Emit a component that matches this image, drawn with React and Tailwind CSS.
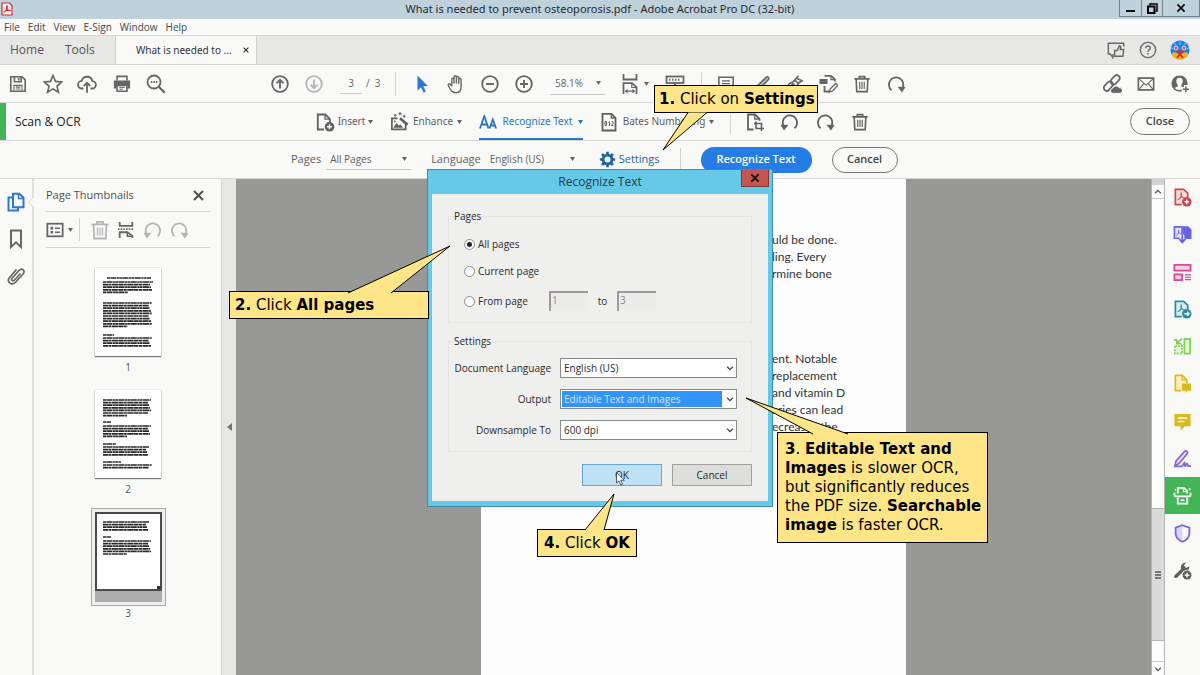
import React, { useState } from 'react';

const Svg = ({ size = 20, className = '', children }) => (
  <svg
    width={size}
    height={size}
    viewBox="0 0 20 20"
    fill="none"
    stroke="currentColor"
    strokeWidth="1.8"
    className={`shrink-0 ${className}`}
    aria-hidden="true"
  >
    {children}
  </svg>
);

const ICONS = {
  save: (
    <>
      <path d="M2 2h12.500L18 5.500V18H2z" />
      <path d="M6 2v5.500h7.500V2M10.800 3v3" />
      <path d="M5.500 17.500v-6h9v6M7.500 13.500h5M7.500 15.500h5" strokeWidth="1.2" />
    </>
  ),
  star: <path d="M10 1.5l2.5 5.9 6.300.5-4.800 4.200 1.500 6.200-5.500-3.400-5.500 3.400 1.500-6.200L1.200 7.900l6.300-.5z" strokeWidth="1.6" />,
  cloudUp: (
    <>
      <path d="M6.500 14.500H5a3.800 3.800 0 0 1-.3-7.600 5.500 5.500 0 0 1 10.700.2 3.700 3.700 0 0 1-.4 7.400h-1.500" />
      <path d="M10 18.800V9M6.800 12l3.200-3.300 3.200 3.300" />
    </>
  ),
  printer: (
    <>
      <path d="M4.500 6V1.500h11V6" />
      <path d="M1 6h18v9h-3v-4H4v4H1z" fill="currentColor" stroke="none" />
      <path d="M4.500 11.500h11v6.500h-11z" />
      <path d="M7 13.800h6M7 15.800h4" strokeWidth="1.1" />
    </>
  ),
  search: (
    <>
      <circle cx="8" cy="8" r="6.500" />
      <path d="M12.800 12.800l6 6" strokeWidth="2.200" />
      <path d="M4.800 8h1.500M7.300 8h1.500M9.800 8h1.500" />
    </>
  ),
  up: (
    <>
      <circle cx="10" cy="10" r="7.800" />
      <path d="M10 14.500V6M6.500 9.300L10 5.800l3.500 3.500" strokeWidth="1.900" />
    </>
  ),
  down: (
    <>
      <circle cx="10" cy="10" r="7.800" />
      <path d="M10 5.500V14M6.500 10.700l3.500 3.500 3.500-3.500" strokeWidth="1.900" />
    </>
  ),
  arrow: <path d="M5.500 1.500v15l3.500-3.300 2.600 5.500 2.300-1.100-2.600-5.300 4.500-.3z" fill="currentColor" stroke="none" />,
  hand: (
    <path
      d="M5.800 12.200V5.300c0-1.600 2.200-1.600 2.200 0V9.500M8 9.500V3c0-1.600 2.400-1.600 2.400 0v6.500M10.400 9.500V3.600c0-1.600 2.400-1.600 2.400 0v6M12.800 9.700V5.600c0-1.500 2.300-1.500 2.300 0v6.800c0 4-1.700 6.300-5.100 6.300-4.500 0-5.500-3-7.600-7.100-.8-1.600 1.100-2.500 2-1.200l1.400 1.800"
      strokeWidth="1.400"
    />
  ),
  minus: (
    <>
      <circle cx="10" cy="10" r="7.800" />
      <path d="M6 10h8" strokeWidth="1.900" />
    </>
  ),
  plus: (
    <>
      <circle cx="10" cy="10" r="7.800" />
      <path d="M6 10h8M10 6v8" strokeWidth="1.900" />
    </>
  ),
  fitWidth: (
    <>
      <path d="M3.500 0v5.500h13V0" />
      <path d="M3.500 20V9.200h8.500l4.500 4v6.800" />
      <path d="M11.800 9.500v4h4.500" strokeWidth="1.200" />
      <path d="M6 17.200h8M7.500 15.500L5.700 17.200l1.800 1.700M12.500 15.500l1.800 1.700-1.800 1.700" strokeWidth="1.200" />
    </>
  ),
  keyboard: (
    <>
      <rect x="1.500" y="2.500" width="17" height="6.500" />
      <path d="M4 5.800h12" strokeDasharray="1.500 1.500" strokeWidth="2" />
      <path d="M10 9v3.500M7 12.500h6" />
    </>
  ),
  note: (
    <>
      <path d="M2 2.500h16v12h-6.500l-3.500 3.500v-3.500H2z" />
      <path d="M5.500 6.500h9M5.500 9.500h9" strokeWidth="1.300" />
    </>
  ),
  pen: <path d="M3 17.500l1.500-5L14.800 2.300c1.600-1 3.400.8 2.600 2.400L7.300 15.500z" fill="#b9b9b9" />,
  sign: (
    <>
      <path d="M2.500 17.500l1.800-7.500 7-4 3.500 3.500-3.500 6.500z" />
      <path d="M9.500 7L15 .8M12.500 3.500l6.500 3-5 3" />
      <circle cx="8.800" cy="11.200" r="1.400" fill="currentColor" />
    </>
  ),
  editDoc: (
    <>
      <path d="M6.500 1.800h6.700l3.800 3.700v2M6.500 12v5.500h5" />
      <path d="M13 2v3.700h4" strokeWidth="1.200" />
      <rect x="1.500" y="5" width="8" height="5" fill="currentColor" stroke="none" />
      <path d="M11.500 18l.8-3.200 5.500-5.300 2 2-5.300 5.500z" strokeWidth="1.300" />
    </>
  ),
  trash: (
    <>
      <path d="M1.500 4.300h17M7 4V1.800h6V4" />
      <path d="M3.500 4.500l.7 14h11.600l.7-14" />
      <path d="M7.500 7.500v8M10 7.500v8M12.500 7.500v8" strokeWidth="1.300" />
    </>
  ),
  redo: (
    <>
      <path d="M5.500 16.200a7.200 7.200 0 1 1 11-2.200" />
      <path d="M11.500 12.800l8 .2-3.500 5.500z" fill="currentColor" stroke="none" />
    </>
  ),
  undo: (
    <>
      <path d="M14.500 16.200A7.200 7.200 0 1 0 3.500 14" />
      <path d="M8.500 12.800l-8 .2L4 18.500z" fill="currentColor" stroke="none" />
    </>
  ),
  insert: (
    <>
      <path d="M9 17.500H2.800v-15h7.500l4.500 4.300v4" />
      <path d="M10 2.800v4.400h4.500" strokeWidth="1.300" />
      <circle cx="14.500" cy="14.800" r="4.800" fill="currentColor" stroke="none" />
      <path d="M14.500 12.300v5M12 14.800h5" stroke="#f9f9f8" strokeWidth="1.400" />
    </>
  ),
  enhance: (
    <>
      <path d="M8 6.800H2v11.500h14.500v-6" />
      <path d="M3.500 16.500l3.300-5 2.500 3 1.500-1.500 3 3.500z" fill="currentColor" stroke="none" />
      <path d="M10.500 6.500l8 7" strokeWidth="2.800" />
      <path d="M5.500 2v3M4 3.500h3M10.500 0v3.500M8.800 1.800h3.500M15 3v3M13.500 4.500h3" strokeWidth="1.100" />
      <circle cx="5" cy="10" r="1" fill="currentColor" stroke="none" />
    </>
  ),
  page: (
    <>
      <path d="M3.500 1.800h9l4 4v12.700h-13z" />
      <path d="M12.300 2v4h4" strokeWidth="1.300" />
    </>
  ),
  cropPage: (
    <>
      <path d="M8.500 17.500H3v-15h7l4.500 4.300v2" />
      <path d="M9.800 2.800v4.200h4.500" strokeWidth="1.300" />
      <path d="M11 9.500v7h8M9 11.500h7.500v7.500" strokeWidth="1.600" />
    </>
  ),
  gear: (
    <>
      <circle cx="10" cy="10" r="5.200" strokeWidth="3.400" />
      <path d="M10 1v3M10 16v3M1 10h3M16 10h3M3.600 3.600l2.200 2.200M14.200 14.200l2.200 2.200M3.600 16.400l2.200-2.200M14.200 5.800l2.200-2.200" strokeWidth="3.200" />
    </>
  ),
  share: (
    <>
      <path d="M6.500 14.500v4l-2.800-4H1.500v-12h17v3.500" strokeWidth="1.600" />
      <path d="M8.500 10.500h2.800l2.500-5.200c1.800 0 1.700 1.800 1 4.200h3.700l-.8 7.500H8.500z" fill="#e7e7e6" strokeWidth="1.600" />
    </>
  ),
  help: (
    <>
      <circle cx="10" cy="10" r="8.500" strokeWidth="1.500" />
      <path d="M7.500 8c0-3.300 5-3.300 5 0 0 1.700-2.500 1.700-2.500 4M10 13.300v1.700" strokeWidth="1.700" />
    </>
  ),
  link: (
    <>
      <rect x="10" y="0.500" width="6" height="10.500" rx="3" transform="rotate(42 13 6)" />
      <rect x="3.500" y="7" width="6" height="10.500" rx="3" transform="rotate(42 6.500 12)" />
      <path d="M10 19.300a2.900 2.900 0 0 1 .8-5.300 3.600 3.600 0 0 1 6.400-.3 2.800 2.800 0 0 1 1 5.600z" fill="currentColor" stroke="#f9f9f8" strokeWidth="1" />
    </>
  ),
  mail: (
    <>
      <path d="M1.500 3.500h17v13h-17z" />
      <path d="M1.800 4l8.200 7.200L18.200 4M2 16.200l5.500-6.500M18 16.200l-5.500-6.500" strokeWidth="1.300" />
    </>
  ),
  user: (
    <>
      <circle cx="9.500" cy="9.500" r="9" fill="currentColor" stroke="none" />
      <path d="M9.500 3c4.600 0 4.200 5.800 2 8v1.800l3.200 1.400c-.8 3.300-9.600 3.300-10.400 0l3.200-1.400V11c-2.200-2.200-2.600-8 2-8z" fill="#f9f9f8" stroke="none" />
      <path d="M16.500 11v9M12 15.700h8" stroke="#f9f9f8" strokeWidth="4.400" />
      <path d="M16.500 12.500v6.800M13 15.900h7" strokeWidth="1.700" />
    </>
  ),
  pages: (
    <>
      <path d="M6 5.500H2.500v13h9.500V15.500" strokeWidth="2" />
      <path d="M7 1.800h6.300l4.200 4v9.500H7z" strokeWidth="2" />
      <path d="M12.500 2v4.500h5" strokeWidth="1.400" />
    </>
  ),
  bookmark: <path d="M5 1.500h10v16.500l-5-4.700-5 4.700z" strokeWidth="2" />,
  clip: (
    <path
      d="M14.500 7.500l-6 6.500c-1.800 1.900-4-.2-2.400-2L13 4.500c3-3 6.700.4 4 3.500l-7.500 8.200c-4 4.200-9.500-.7-5.800-5l6.800-7.700"
      strokeWidth="1.700"
    />
  ),
  close: <path d="M4 4l12 12M16 4L4 16" strokeWidth="2.800" />,
  list: (
    <>
      <rect x="1.500" y="3" width="17" height="14" strokeWidth="2" />
      <path d="M5 8h3M5 12.500h3" strokeWidth="3" />
      <path d="M10 8h5.500M10 12.500h5.500" strokeWidth="1.600" />
    </>
  ),
  split: (
    <>
      <path d="M3 1v4.500h14V1" strokeWidth="2" />
      <path d="M1 9h18" strokeDasharray="1.800 1.200" />
      <path d="M3 19v-6.500h8.500l5.500 4V19" strokeWidth="2" />
      <path d="M11.500 13v4h5" strokeWidth="1.600" />
    </>
  ),
  createPdf: (
    <>
      <path d="M9 17.500H2.500v-16h8.700l4.300 4v4" fill="#f9dcde" />
      <path d="M4.800 12.500c3.500-1.800 4.500-5 3.800-7.200-1.300 3 1.500 5 4.200 5.400" strokeWidth="1.100" />
      <circle cx="14.500" cy="14.500" r="5" fill="currentColor" stroke="none" />
      <path d="M14.500 12v5M12 14.500h5" stroke="#fff" strokeWidth="1.400" />
    </>
  ),
  combine: (
    <>
      <path d="M10.500 1.200h5.500l3.500 3.500v10h-9z" fill="currentColor" stroke="none" />
      <path d="M7 14H1.500V2h8v9" fill="#e4e2fb" strokeWidth="1.700" />
      <path d="M3.300 11c2.500-1.500 3.200-4 2.600-5.500-1 2 .8 3.500 2.600 4" strokeWidth="1" />
      <path d="M9.800 10v6M6.500 14.500l3.300 4 3.300-4" stroke="#f9f9f8" strokeWidth="4" />
      <path d="M9.800 10v7M6.500 14.500l3.300 3.700 3.300-3.700" strokeWidth="2" />
    </>
  ),
  organize: (
    <>
      <rect x="1.500" y="2" width="17" height="6" fill="#f6cfe2" />
      <rect x="1.500" y="12" width="8" height="6" fill="#f6cfe2" />
      <path d="M12.500 12.500h6.500M12.500 15h6.500M12.500 17.500h6.500" strokeWidth="1.200" />
    </>
  ),
  exportPdf: (
    <>
      <path d="M9 17.500H2.500v-16h8.700l4.300 4v4" fill="#d3ebee" />
      <path d="M4.800 12.500c3.500-1.800 4.500-5 3.800-7.200-1.300 3 1.500 5 4.200 5.400" strokeWidth="1.100" />
      <circle cx="14.500" cy="14.500" r="5" fill="currentColor" stroke="none" />
      <path d="M11.800 14.500h5M14.800 12.300l2.200 2.200-2.200 2.200" stroke="#fff" strokeWidth="1.400" />
    </>
  ),
  compress: (
    <>
      <rect x="12" y="2" width="6" height="15.500" fill="#e0f5d0" />
      <rect x="2" y="9.500" width="7.500" height="8" fill="#e0f5d0" strokeDasharray="2 1.200" />
      <path d="M1 3h3" />
      <path d="M9.500 1.800L4.500 6.500M4 2.500v4.500h5" strokeWidth="1.900" />
    </>
  ),
  comment: (
    <>
      <path d="M8.500 17.500H2.500v-16h7.200l4.800 4.500v4" fill="#fbf0c0" />
      <path d="M9.500 1.800v4.500h4.500" strokeWidth="1.300" />
      <path d="M9.500 10h9.500v7.500h-3.500L13.500 20v-2.500h-4z" fill="currentColor" stroke="none" />
    </>
  ),
  bubble: (
    <>
      <path d="M1.500 2h17v13h-6l-4.500 4.500V15H1.500z" fill="currentColor" stroke="none" />
      <path d="M5 6.500h10M5 10h7" stroke="#fdf6d5" />
    </>
  ),
  fillSign: (
    <>
      <path d="M2 17.800l1.200-5L12 2.700c1.800-1.700 4.300.4 2.900 2.400l-8.400 10z" fill="#ece6fb" />
      <path d="M2 18.300h7c1.500 0 2.500-4.500 3.200-4.300.8.300-.8 4 .6 4 1 0 1-2.500 2-2.500s.2 2.500 1.300 2.500h2.900" />
    </>
  ),
  scan: (
    <>
      <path d="M5 8V2h6.500l3.500 3.300V8M5 12v6.500h10V12" strokeWidth="1.900" />
      <path d="M1.500 7v2.500c0 1 .5 1.500 1.500 1.500h14c1 0 1.500-.5 1.500-1.500V7" strokeWidth="1.900" />
      <path d="M11 2v3.800h4" strokeWidth="1.300" />
      <path d="M8 15h4" />
      <path d="M2.500 3v2M17.500 2v2.500M16.300 3.200h2.500" strokeWidth="1" />
    </>
  ),
  shield: (
    <>
      <path d="M10 3v14.500c-4-2-6.500-4.500-6.500-7.500V4.500z" fill="#d9d4f8" stroke="none" />
      <path d="M10 1.300l7.200 2.500v6.500c0 4-3.200 6.700-7.200 8.400-4-1.700-7.200-4.400-7.200-8.400V3.800z" strokeWidth="1.900" />
    </>
  ),
  wrench: (
    <>
      <path d="M1.500 15.200l7-6.700C7.300 5 10 1.300 13.800 1.800l-2.300 2.700 2.300 2.800 3.200-1.800c.4 2-.4 3.700-1.800 4.800-1.500 1-3 1-4 .5l-7 6.800c-1.800 1.300-4-.8-2.700-2.400z" fill="currentColor" stroke="none" />
      <circle cx="14.800" cy="14.800" r="5.500" fill="#f9f9f8" stroke="none" />
      <circle cx="14.800" cy="14.800" r="4.700" fill="currentColor" stroke="none" />
      <path d="M14.800 12.300v5M12.300 14.800h5" stroke="#fff" strokeWidth="1.400" />
    </>
  ),
  chevron: <path d="M3 7l7 7 7-7" strokeWidth="3.200" />,
};

const Icon = ({ name, size, className }) => (
  <Svg size={size} className={className}>{ICONS[name]}</Svg>
);

const Caret = () => (
  <svg width="5" height="4" viewBox="0 0 5 4" className="shrink-0 fill-current" aria-hidden="true">
    <path d="M0 0h5L2.500 4z" />
  </svg>
);

const IconButton = ({ name, label, size = 18, className = '' }) => (
  <button type="button" aria-label={label} className={`flex w-5 shrink-0 items-center justify-center ${className}`}>
    <Icon name={name} size={size} />
  </button>
);

const Divider = ({ className = '' }) => <span className={`w-px shrink-0 bg-[#d2d2d1] ${className}`} />;

const TitleBar = () => (
  <header className="relative flex h-[19px] shrink-0 items-center justify-center bg-[#bfd2dc] text-black">
    <svg width="12" height="14" viewBox="0 0 12 14" className="absolute left-px top-[2px]" aria-hidden="true">
      <path d="M1 1h7.500L11 3.500V13H1z" fill="#fdecec" stroke="#c9303a" strokeWidth="1.200" />
      <path d="M3 10c2.500-1 3.800-4 3-6.500C4.500 6.500 7 8.500 9.500 8.500 7 8 4.500 8.500 3 10z" fill="#d0202c" stroke="#d0202c" />
    </svg>
    <h1 className="font-['Noto_Sans',sans-serif] text-[11px] text-[#1f2b33]">
      What is needed to prevent osteoporosis.pdf - Adobe Acrobat Pro DC (32-bit)
    </h1>
    <div className="absolute right-0 top-0 flex h-[17px] border-b border-l border-[#6e8490]">
      <button type="button" aria-label="Minimize" className="flex w-[22px] items-end justify-center border-r border-[#6e8490] pb-1">
        <span className="h-[2px] w-[9px] bg-black" />
      </button>
      <button type="button" aria-label="Restore" className="flex w-[21px] items-center justify-center border-r border-[#6e8490]">
        <svg width="11" height="11" viewBox="0 0 11 11" fill="none" stroke="#000" aria-hidden="true">
          <path d="M3 2.500V1h7v7H8.500" strokeWidth="1.500" />
          <rect x="1" y="3.500" width="6.500" height="6.500" strokeWidth="2" />
        </svg>
      </button>
      <button type="button" aria-label="Close window" className="flex w-[37px] items-center justify-center border-r border-[#6e8490]">
        <Icon name="close" size={12} />
      </button>
    </div>
  </header>
);

const MenuBar = () => (
  <nav className="flex h-4 shrink-0 items-center gap-2 bg-[#fbfbfb] pl-1 text-[10px] text-[#444]">
    {['File', 'Edit', 'View', 'E-Sign', 'Window', 'Help'].map((item) => (
      <button key={item} type="button">{item}</button>
    ))}
  </nav>
);

const Avatar = () => (
  <svg width="20" height="20" viewBox="0 0 20 20" aria-hidden="true">
    <clipPath id="avatar">
      <circle cx="10" cy="10" r="9.500" />
    </clipPath>
    <g clipPath="url(#avatar)">
      <path d="M0 0h20v20H0z" fill="#1583e0" />
      <path d="M0 14l5-2 5 3 5-3 5 2v6H0z" fill="#f8b418" />
      <path d="M4 2l2 3M16 2l-2 3M10 0v5M1 8l2 1M19 8l-2 1" stroke="#38c0f0" strokeWidth="1.500" />
      <path d="M7 10l6 8M13 10l-6 8" stroke="#e02a28" strokeWidth="2" />
      <circle cx="6" cy="8" r="2.500" fill="#f3a5c8" />
      <circle cx="14" cy="8" r="2.500" fill="#f3a5c8" />
      <circle cx="6" cy="8" r="1" fill="#8b3a90" />
      <circle cx="14" cy="8" r="1" fill="#8b3a90" />
    </g>
  </svg>
);

const TabBar = () => (
  <div className="flex h-[30px] shrink-0 items-stretch border-y border-[#d6d6d5] bg-[#e7e7e6]">
    <div className="flex w-[116px] shrink-0 items-center gap-[21px] border-r border-[#d0d0cf] pl-[10px] text-xs text-[#555]">
      <button type="button">Home</button>
      <button type="button">Tools</button>
    </div>
    <div className="flex w-[141px] shrink-0 items-center justify-between border-r border-[#d0d0cf] bg-[#f9f9f8] pl-5 pr-[6px] font-['Noto_Sans',sans-serif] text-[10px] text-[#333]">
      <span>What is needed to ...</span>
      <button type="button" aria-label="Close tab"><Icon name="close" size={8} /></button>
    </div>
    <div className="ml-auto flex items-center gap-3 pr-[10px] text-[#6a6a6a]">
      <IconButton name="share" label="Share feedback" />
      <IconButton name="help" label="Help" />
      <button type="button" aria-label="Account"><Avatar /></button>
    </div>
  </div>
);

const Toolbar = () => (
  <div className="flex h-[38px] shrink-0 items-center border-b border-[#d6d6d5] text-[10px] text-[#666]">
    <div className="ml-2 flex w-[158px] shrink-0 justify-between">
      <IconButton name="save" label="Save" />
      <IconButton name="star" label="Star" size={20} />
      <IconButton name="cloudUp" label="Upload" size={20} />
      <IconButton name="printer" label="Print" />
      <IconButton name="search" label="Search" size={20} />
    </div>
    <div className="ml-[104px] flex shrink-0 items-center">
      <IconButton name="up" label="Previous page" size={20} />
      <IconButton name="down" label="Next page" size={20} className="ml-[14px] text-[#b5b5b5]" />
      <input aria-label="Page number" defaultValue="3" className="ml-4 h-5 w-[22px] border-b border-[#c8c8c8] text-center" />
      <span className="ml-1 w-5">/ &nbsp;3</span>
      <Divider className="ml-[9px] h-6" />
      <IconButton name="arrow" label="Select" size={20} className="ml-4 text-[#2a78d0]" />
      <IconButton name="hand" label="Pan" size={20} className="ml-[14px]" />
      <IconButton name="minus" label="Zoom out" size={20} className="ml-[14px]" />
      <IconButton name="plus" label="Zoom in" size={20} className="ml-[14px]" />
      <button type="button" className="ml-4 flex h-[22px] w-[55px] items-center justify-between border-b border-[#c8c8c8] pl-[5px] pr-1">
        58.1% <Caret />
      </button>
      <button type="button" aria-label="Fit width" className="ml-[15px] flex items-center gap-1">
        <Icon name="fitWidth" size={20} />
        <Caret />
      </button>
      <IconButton name="keyboard" label="Page display" size={20} className="ml-4" />
      <Divider className="ml-4 h-6" />
      <IconButton name="note" label="Comment" className="ml-[14px]" />
      <IconButton name="pen" label="Highlight" className="ml-4" />
      <IconButton name="sign" label="Sign" className="ml-3" />
      <IconButton name="editDoc" label="Edit" size={20} className="ml-[14px]" />
      <IconButton name="trash" label="Delete" className="ml-[14px]" />
      <IconButton name="redo" label="Rotate" size={20} className="ml-[14px]" />
    </div>
    <div className="ml-auto flex gap-[14px] pr-[10px]">
      <IconButton name="link" label="Copy link" size={20} />
      <IconButton name="mail" label="Email" />
      <IconButton name="user" label="Add people" />
    </div>
  </div>
);

const ScanBar = () => (
  <div className="flex h-[38px] shrink-0 items-center border-b border-[#d6d6d5] font-['Noto_Sans',sans-serif] text-[10px] text-[#606060]">
    <span className="h-full w-[6px] shrink-0 bg-[#44b556]" />
    <h2 className="ml-[9px] w-[300px] shrink-0 font-['Open_Sans',sans-serif] text-xs text-[#222]">Scan &amp; OCR</h2>
    <button type="button" className="flex w-[58px] shrink-0 items-center justify-between">
      <Icon name="insert" size={20} /> Insert <Caret />
    </button>
    <button type="button" className="ml-[17px] flex w-[72px] shrink-0 items-center justify-between">
      <Icon name="enhance" size={19} /> Enhance <Caret />
    </button>
    <button type="button" className="ml-[17px] flex h-full w-[104px] shrink-0 items-center justify-between border-y-2 border-t-transparent border-b-[#2a74c0] text-[#2a74c0]">
      <svg width="18" height="14" viewBox="0 0 18 14" fill="none" stroke="currentColor" strokeWidth="1.800" aria-hidden="true">
        <path d="M1 13.500L5.300 1l4.200 12.500M2.500 9.500h5.700M10.500 13.500l3.300-9 3.300 9M11.500 10.500h4.500" />
      </svg>
      Recognize Text <Caret />
    </button>
    <button type="button" className="ml-4 flex w-[115px] shrink-0 items-center justify-between">
      <span className="relative flex">
        <Icon name="page" size={20} />
        <svg width="10" height="6" viewBox="0 0 10 6" className="absolute left-[5px] top-[9px]" fill="none" stroke="currentColor" aria-hidden="true">
          <path d="M1 .5h1.500v4H1zM4.500 1.500l1-.8v4.300M7.500.8h1.500v1.800L7.500 4.500H9.500" />
        </svg>
      </span>
      Bates Numbering <Caret />
    </button>
    <Divider className="ml-4 h-6" />
    <div className="ml-[14px] flex shrink-0 gap-[15px]">
      <IconButton name="cropPage" label="Crop page" size={20} />
      <IconButton name="undo" label="Rotate left" size={20} />
      <IconButton name="redo" label="Rotate right" size={20} />
      <IconButton name="trash" label="Delete pages" />
    </div>
    <button type="button" className="ml-auto mr-[10px] h-[27px] w-[60px] rounded-full border border-[#777] font-['Open_Sans',sans-serif] text-[11px] font-semibold text-[#444]">
      Close
    </button>
  </div>
);

const UnderlineSelect = ({ id, label, value, className }) => (
  <div className="flex shrink-0 items-center gap-[5px]">
    <label htmlFor={id}>{label}</label>
    <div className={`relative flex h-5 items-center border-b border-[#c8c8c8] ${className}`}>
      <select id={id} defaultValue={value} className="w-full appearance-none bg-transparent pl-1 text-[10px] outline-none">
        <option>{value}</option>
      </select>
      <span className="pointer-events-none absolute right-1"><Caret /></span>
    </div>
  </div>
);

const OptionsBar = () => (
  <div className="flex h-[38px] shrink-0 items-center border-b border-[#d6d6d5] pl-[291px] text-[11px] text-[#606060]">
    <UnderlineSelect id="pages" label="Pages" value="All Pages" className="w-[85px]" />
    <div className="ml-5 flex">
      <UnderlineSelect id="language" label="Language" value="English (US)" className="w-[93px]" />
    </div>
    <button type="button" className="ml-5 flex shrink-0 items-center gap-[3px] text-[#1d63a8]">
      <Icon name="gear" size={17} /> Settings
    </button>
    <Divider className="ml-5 h-6" />
    <button type="button" className="ml-5 h-[26px] w-[111px] shrink-0 rounded-full bg-[#257ce5] font-semibold text-white">
      Recognize Text
    </button>
    <button type="button" className="ml-5 h-[26px] w-[66px] shrink-0 rounded-full border border-[#777] font-semibold text-[#444]">
      Cancel
    </button>
  </div>
);

// each row: y, line count, x, width
const THUMBS = [
  { page: 1, rows: [[10, 1, 12, 44], [14, 5, 8, 50], [35, 10, 8, 49], [67, 1, 8, 11], [70, 4, 8, 49]] },
  { page: 2, rows: [[10, 7, 8, 48], [32, 1, 8, 8], [36, 5, 8, 48], [54, 1, 8, 13], [57, 4, 8, 46], [72, 1, 8, 18], [75, 2, 8, 49]] },
  { page: 3, rows: [[8, 4, 6, 46], [23, 1, 6, 8], [27, 6, 6, 48]] },
];

const ThumbText = ({ rows }) => (
  <svg width="66" height="88" viewBox="0 0 66 88" aria-hidden="true">
    {rows.map(([y, count, x, w]) =>
      Array.from({ length: count }, (_, i) => (
        <path
          key={`${y}-${i}`}
          d={`M${x} ${y + i * 2.6}h${i === count - 1 && count > 4 ? w * 0.5 : w - ((i * 3) % 4)}`}
          stroke="#2a2a2a"
          strokeWidth="1.700"
          strokeDasharray={i % 2 ? '5 .4 3 .5 6 .4' : '3 .4 6 .5 2 .3'}
        />
      ))
    )}
  </svg>
);

const Thumbnail = ({ page, rows, active }) => (
  <figure className="flex flex-col items-center">
    {active ? (
      <div className="-mt-1 border border-[#a8a8a8] bg-[#eee] p-[3px]">
        <div className="h-[90px] w-[67px] bg-[#adadad]">
          <div className="relative h-[79px] overflow-hidden border-2 border-[#4a4a4a] bg-white">
            <ThumbText rows={rows} />
            <span className="absolute bottom-0 right-0 size-[3px] bg-[#333]" />
          </div>
        </div>
      </div>
    ) : (
      <div className="mb-1 bg-white shadow-[0_1px_1px_#777,0_0_1px_#999]">
        <ThumbText rows={rows} />
      </div>
    )}
    <figcaption className="text-[10px] leading-[15px] text-[#555]">{page}</figcaption>
  </figure>
);

const SidePanel = () => (
  <aside className="flex shrink-0">
    <div className="relative flex w-[34px] flex-col items-center gap-[17px] border-r-2 border-[#e0e0df] pt-[13px] text-[#666]">
      <IconButton name="pages" label="Page thumbnails" size={20} className="text-[#2a78d0]" />
      <IconButton name="bookmark" label="Bookmarks" size={20} />
      <IconButton name="clip" label="Attachments" size={20} />
      <svg width="6" height="12" viewBox="0 0 6 12" className="absolute -right-[2px] top-[17px]" aria-hidden="true">
        <path d="M6 0L1 6l5 6" fill="#f9f9f8" stroke="#d6d6d5" />
      </svg>
    </div>
    <div className="w-[188px] border-r border-[#d6d6d5] pl-3 pr-[11px]">
      <div className="flex h-[33px] items-center justify-between border-b border-[#d6d6d5] pr-[2px] text-[11px] text-[#505050]">
        <h2>Page Thumbnails</h2>
        <IconButton name="close" label="Close panel" size={15} />
      </div>
      <div className="flex h-9 items-center border-b border-[#d6d6d5] text-[#666]">
        <button type="button" aria-label="Options" className="flex items-center gap-1">
          <Icon name="list" size={18} /> <Caret />
        </button>
        <Divider className="ml-[6px] h-[23px]" />
        <IconButton name="trash" label="Delete" size={20} className="ml-[10px] text-[#b5b5b5]" />
        <IconButton name="split" label="Split" className="ml-[6px]" />
        <IconButton name="undo" label="Rotate left" size={20} className="ml-[7px] text-[#b5b5b5]" />
        <IconButton name="redo" label="Rotate right" size={20} className="ml-[6px] text-[#b5b5b5]" />
      </div>
      <div className="flex flex-col items-center gap-[15px] pt-5">
        {THUMBS.map((thumb) => (
          <Thumbnail key={thumb.page} {...thumb} active={thumb.page === 3} />
        ))}
      </div>
    </div>
    <button type="button" aria-label="Collapse panel" className="flex w-[14px] items-center justify-center bg-[#e7e7e6]">
      <svg width="5" height="8" viewBox="0 0 5 8" aria-hidden="true"><path d="M5 0v8L0 4z" fill="#777" /></svg>
    </button>
  </aside>
);

const DocumentPage = () => (
  <main className="flex flex-1 justify-center bg-[#989897]">
    <article className="w-[425px] bg-[#fdfdfd] pl-[291px] pt-[52px] font-[Lato,sans-serif] text-xs leading-[17px] text-[#333]">
      <p>
        uld be done.<br />ling. Every<br />rmine bone
      </p>
      <p className="mt-[68px]">
        ent. Notable<br />replacement<br />and vitamin D<br />aries can lead<br />ecreases the
      </p>
    </article>
  </main>
);

const ScrollBar = () => (
  <div className="flex w-[14px] shrink-0 flex-col border-x border-[#b5b5b5] bg-[#fdfdfd] text-[#555]">
    <span className="h-[6px] bg-[#d2d2d2]" />
    <button type="button" aria-label="Scroll up" className="flex h-[14px] items-center justify-center border-b border-[#c8c8c8]">
      <Icon name="chevron" size={8} className="rotate-180" />
    </button>
    <div className="flex flex-1 flex-col justify-end pb-5">
      <div className="flex h-[133px] flex-col items-center justify-center gap-px border-y border-[#b5b5b5] bg-[#dadada]">
        {[0, 1, 2].map((i) => <span key={i} className="h-[2px] w-[6px] bg-[#777]" />)}
      </div>
    </div>
    <button type="button" aria-label="Scroll down" className="flex h-[14px] items-center justify-center border-t border-[#c8c8c8]">
      <Icon name="chevron" size={8} />
    </button>
  </div>
);

const TOOLS = [
  ['createPdf', 'Create PDF', 'text-[#cf4450]'],
  ['combine', 'Combine files', 'text-[#6862e0]'],
  ['organize', 'Organize pages', 'text-[#d0478f]'],
  ['exportPdf', 'Export PDF', 'text-[#2a8d99]'],
  ['compress', 'Compress PDF', 'text-[#84cf55]'],
  ['comment', 'Send for comments', 'text-[#dbb820]'],
  ['bubble', 'Comment', 'text-[#dcb91e]'],
  ['fillSign', 'Fill & sign', 'text-[#8464d0]'],
  ['scan', 'Scan & OCR', 'bg-[#44b556] text-white'],
  ['shield', 'Protect', 'text-[#7468dc]'],
  ['wrench', 'More tools', 'text-[#5f5f5f]'],
];

const ToolRail = () => (
  <aside className="w-[35px] shrink-0">
    <div className="flex h-[410px] flex-col">
      {TOOLS.map(([name, label, color]) => (
        <button key={name} type="button" aria-label={label} className={`flex flex-1 items-center justify-center ${color}`}>
          <Icon name={name} size={19} />
        </button>
      ))}
    </div>
  </aside>
);

const DialogSelect = ({ id, label, value, highlighted }) => (
  <div className="flex items-center">
    <label htmlFor={id} className="w-[111px] pr-[9px] text-right">{label}</label>
    <div className="relative flex h-5 w-[177px] items-center border border-[#8a8a8a] bg-white">
      <select
        id={id}
        defaultValue={value}
        className={`ml-px mr-[14px] h-4 flex-1 appearance-none pl-[2px] outline-none ${highlighted ? 'bg-[#3293fb] text-[#d5e9ff]' : ''}`}
      >
        <option>{value}</option>
      </select>
      <Icon name="chevron" size={8} className="pointer-events-none absolute right-[2px] text-[#444]" />
    </div>
  </div>
);

const RecognizeDialog = () => {
  const [range, setRange] = useState('all');

  const radio = (value, label) => (
    <label className="flex items-center gap-[3px]">
      <input
        type="radio"
        name="range"
        value={value}
        checked={range === value}
        onChange={() => setRange(value)}
        className="size-[11px] appearance-none rounded-full border border-[#8a8a8a] bg-white checked:bg-[radial-gradient(circle,#222_0_2px,#fff_3px)]"
      />
      {label}
    </label>
  );

  return (
    <section
      role="dialog"
      aria-label="Recognize Text"
      className="absolute left-1/2 top-[169px] w-[346px] -translate-x-1/2 border border-[#3b8fad] bg-[#66c9e8] px-1 pb-[5px] text-[10px] leading-[14px] text-[#2a2a2a]"
    >
      <div className="relative flex h-6 items-center justify-center">
        <h2 className="text-xs text-[#1f3d48]">Recognize Text</h2>
        <button type="button" aria-label="Close dialog" className="absolute -right-px top-0 flex h-[17px] w-[28px] items-center justify-center border border-t-0 border-[#7d3a38] bg-[#c75550] text-black">
          <Icon name="close" size={12} />
        </button>
      </div>
      <form className="bg-[#efefee] px-4 pb-[15px] pt-[15px]">
        <fieldset className="h-[114px] border border-[#e3e3e2] px-[15px]">
          <legend className="-ml-[10px]">Pages</legend>
          <div className="mt-[14px] flex flex-col items-start gap-[13px]">
            {radio('all', 'All pages')}
            {radio('current', 'Current page')}
            <div className="flex items-center">
              <div className="w-[85px]">{radio('from', 'From page')}</div>
              <input aria-label="First page" disabled defaultValue="1" className="h-5 w-[39px] border-l-2 border-t-2 border-[#9a9a9a] bg-[#ececeb] pb-1 pl-px text-[#888]" />
              <span className="w-[29px] text-center">to</span>
              <input aria-label="Last page" disabled defaultValue="3" className="h-5 w-[39px] border-l-2 border-t-2 border-[#9a9a9a] bg-[#ececeb] pb-1 pl-px text-[#888]" />
            </div>
          </div>
        </fieldset>
        <fieldset className="mt-[11px] h-[118px] border border-[#e3e3e2]">
          <legend className="ml-[5px]">Settings</legend>
          <div className="mt-[10px] flex flex-col gap-[11px]">
            <DialogSelect id="doc-language" label="Document Language" value="English (US)" />
            <DialogSelect id="output" label="Output" value="Editable Text and Images" highlighted />
            <DialogSelect id="downsample" label="Downsample To" value="600 dpi" />
          </div>
        </fieldset>
        <div className="mt-3 flex justify-end gap-[10px]">
          <button type="button" className="relative h-[22px] w-20 border border-[#6aa5d0] bg-[#bfe1f6]">
            OK
            <svg width="9" height="14" viewBox="0 0 9 14" className="absolute left-[33px] top-[7px]" aria-hidden="true">
              <path d="M.5.5v10.500l2.500-2.200 1.800 4.300 1.800-.8-1.800-4h3.500z" fill="#fff" stroke="#333" strokeWidth=".8" />
            </svg>
          </button>
          <button type="button" className="h-[22px] w-20 border border-[#a0a0a0] bg-[#dddddc]">Cancel</button>
        </div>
      </form>
    </section>
  );
};

// a yellow note with a tail; the tail covers the note's border where they meet
const Callout = ({ className, tailClass, tailSize, tail, children }) => {
  const [w, h] = tailSize;
  return (
    <div className={`absolute border border-black bg-[#fee587] font-['DejaVu_Sans',sans-serif] text-black ${className}`}>
      <svg width={w} height={h} viewBox={`0 0 ${w} ${h}`} className={`absolute ${tailClass}`} aria-hidden="true">
        <polygon points={tail} fill="#fee587" />
        <polyline points={tail} fill="none" stroke="#000" strokeLinejoin="bevel" />
      </svg>
      <p className="relative">{children}</p>
    </div>
  );
};

const Callouts = () => (
  <div className="text-[15px] leading-[19px]">
    <Callout className="left-[654px] top-[85px] h-[28px] w-[164px] py-1 pl-1" tailSize={[48, 40]} tailClass="left-[6px] top-[25px]" tail="27,1.500 2,39 46,1.500">
      <b>1.</b> Click on <b>Settings</b>
    </Callout>
    <Callout className="left-[229px] top-[291px] h-[28px] w-[200px] py-1 pl-[5px]" tailSize={[104, 50]} tailClass="left-[117px] top-[-47px]" tail="1,48 103,1 44,48">
      <b>2.</b> Click <b>All pages</b>
    </Callout>
    <Callout className="left-[777px] top-[432px] w-[211px] py-[7px] pl-[7px]" tailSize={[104, 38]} tailClass="left-[-33px] top-[-36px]" tail="68,37 1,1 103,37">
      <b>3</b>. <b>Editable Text and Images</b> is slower OCR, but significantly reduces the PDF size. <b>Searchable image</b> is faster OCR.
    </Callout>
    <Callout className="left-[537px] top-[529px] h-[28px] w-[100px] py-1 pl-[6px]" tailSize={[34, 38]} tailClass="left-[45px] top-[-37px]" tail="2,37 31,1 21,37">
      <b>4.</b> Click <b>OK</b>
    </Callout>
  </div>
);

const App = () => (
  <div className="relative flex h-screen flex-col overflow-hidden bg-[#f9f9f8] font-['Open_Sans',sans-serif]">
    <TitleBar />
    <MenuBar />
    <TabBar />
    <Toolbar />
    <ScanBar />
    <OptionsBar />
    <div className="flex min-h-0 flex-1">
      <SidePanel />
      <DocumentPage />
      <ScrollBar />
      <ToolRail />
    </div>
    <RecognizeDialog />
    <Callouts />
  </div>
);

export default App;
